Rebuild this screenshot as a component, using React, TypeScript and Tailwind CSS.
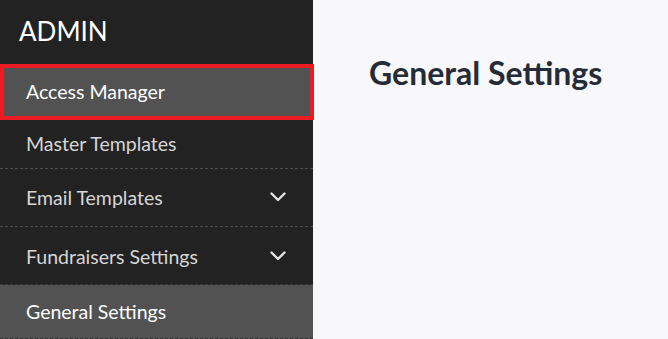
import React from 'react';

const Chevron: React.FC = () => (
  <svg width="16" height="10" viewBox="0 0 16 10" fill="none" className="mr-[27px]">
    <polyline points="1.5,1.5 8,8 14.5,1.5" stroke="#e4e4e4" strokeWidth="2.4" strokeLinecap="round" strokeLinejoin="round" />
  </svg>
);

const App: React.FC = () => {
  return (
    <div className="flex h-[339px] w-[668px] overflow-hidden bg-[#f8f8fa]" style={{ fontFamily: 'Lato, "Open Sans", sans-serif' }}>
      <aside className="w-[313px] shrink-0 bg-[#222222] flex flex-col">
        <div className="h-[64px] flex items-center pl-[19px] pb-[1px]">
          <span className="text-[26px] text-white leading-none">ADMIN</span>
        </div>
        <div className="h-[56px] w-[314px] border-[4px] border-[#ed1c24] bg-[#525252] flex items-center pl-[22px]">
          <span className="text-[19.5px] text-white">Access Manager</span>
        </div>
        <div className="h-[49px] flex items-center pl-[26px] border-b border-dashed border-[#4c4c4c]">
          <span className="text-[19.5px] text-[#d6d6d6]">Master Templates</span>
        </div>
        <div className="h-[59px] flex items-center justify-between pl-[26px] border-b border-dashed border-[#4c4c4c]">
          <span className="text-[19.5px] text-[#d6d6d6]">Email Templates</span>
          <Chevron />
        </div>
        <div className="h-[58px] flex items-center justify-between pl-[26px] pt-[1px] border-b border-dashed border-[#3a3a3a]">
          <span className="text-[19.5px] text-[#d6d6d6]">Fundraisers Settings</span>
          <Chevron />
        </div>
        <div className="h-[54px] flex items-center pl-[26px] bg-[#525252] border-b border-dashed border-[#333333]">
          <span className="text-[19.5px] text-white">General Settings</span>
        </div>
      </aside>
      <main className="flex-1 pl-[56px] pt-[53px]">
        <h1 className="text-[32px] font-bold text-[#262b38] leading-tight">General Settings</h1>
      </main>
    </div>
  );
};

export default App;
